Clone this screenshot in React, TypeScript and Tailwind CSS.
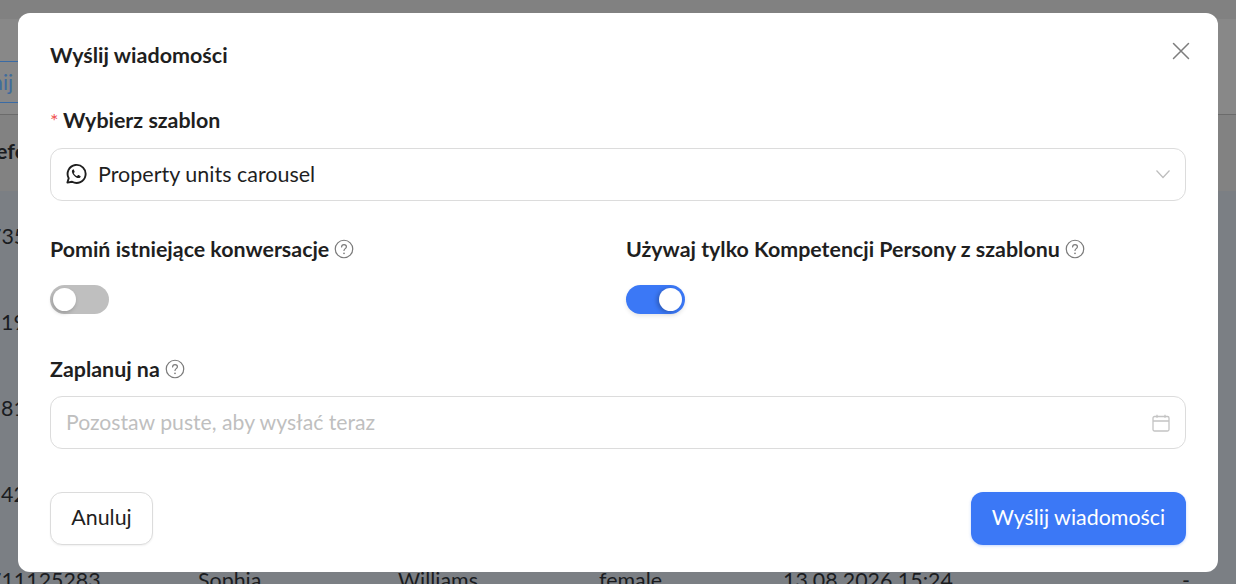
import React from "react";

const Help = () => (
  <svg width="20" height="20" viewBox="0 0 20 20" fill="none" className="shrink-0 text-[#7a7a7a]">
    <circle cx="10" cy="10" r="8.75" stroke="currentColor" strokeWidth="1.2" />
    <path d="M7.600 8c0-1.300 1-2.300 2.400-2.300s2.400.9 2.400 2.100c0 1.800-2.400 1.900-2.400 3.700" stroke="currentColor" strokeWidth="1.200" strokeLinecap="round" />
    <circle cx="10" cy="14.300" r=".85" fill="currentColor" />
  </svg>
);

const WhatsApp = () => (
  <svg width="22" height="22" viewBox="0 0 22 22" fill="none" className="shrink-0">
    <path d="M2.400 19.600l1.300-4.400A9 9 0 1 1 7.100 18.700L2.400 19.600z" stroke="#1f1f1f" strokeWidth="1.900" strokeLinejoin="round" />
    <path d="M8.100 6.400c-.6.2-1.300 1-1.200 2 .2 2.900 3.700 6.300 6.600 6.700 1 .1 1.900-.6 2.100-1.300.1-.4 0-.7-.3-.9l-1.700-.9c-.3-.1-.6-.1-.8.200l-.6.700c-.2.200-.4.200-.7.100-1.100-.5-2-1.400-2.600-2.500-.1-.3-.1-.5.100-.7l.5-.6c.2-.2.2-.5.100-.8l-.8-1.700c-.1-.3-.3-.4-.7-.3z" fill="#1f1f1f" />
  </svg>
);

const Row = ({ id, left, a, b, c, top }: { id: string; left: number; a?: string; b?: string; c?: string; top: number }) => (
  <div className="absolute left-0 right-0 h-6 text-[21.4px] leading-6 text-[#1a1c1f]" style={{ top }}>
    <span className="absolute" style={{ left }}>{id}</span>
    {a && <span className="absolute left-[198px]">{a}</span>}
    {b && <span className="absolute left-[398px]">{b}</span>}
    {c && <span className="absolute left-[599px]">{c}</span>}
  </div>
);

export default function App() {
  return (
    <div className="relative h-[584px] w-[1236px] overflow-hidden bg-[#818181] font-['Lato','Liberation_Sans',sans-serif]">
      <div className="absolute inset-x-0 top-[19px] h-[96px] border-b border-[#6b6b6b] bg-[#888888]" />
      <div className="absolute inset-x-0 top-[115px] h-[76px] bg-[#828282]" />
      <div className="absolute left-0 top-[61px] flex h-[42px] w-[18px] items-center overflow-hidden border-y border-[#3a6ba5] text-[21.4px] text-[#406c9c]">
        <span className="ml-[-9px] whitespace-nowrap">nij</span>
      </div>
      <div className="absolute left-[-31px] top-[139px] text-[21.4px] font-bold leading-6 text-[#1a1c1f]">
        Telefon
      </div>
      <div className="absolute inset-x-0 bottom-0 top-[191px] bg-[#7b7f84]" />
      <Row id="735" left={-11} top={224} />
      <Row id="19" left={1} top={310} />
      <Row id="81" left={1} top={396} />
      <Row id="42" left={1} top={482} />
      <Row id="711125283" left={-11} a="Sophia" b="Williams" c="female" top={568} />
      <span className="absolute left-[783px] top-[568px] text-[21.4px] leading-6 text-[#1a1c1f]">13.08.2026 15:24</span>
      <span className="absolute left-[1182px] top-[568px] text-[21.4px] leading-6 text-[#1a1c1f]">-</span>

      <div className="absolute left-[18px] top-[13px] flex h-[559px] w-[1200px] flex-col rounded-[12px] bg-white px-[32px] text-[#1f1f1f]">
        <div className="flex h-[95px] items-start justify-between pt-[26px]">
          <h2 className="text-[21.5px] font-bold leading-[32px]">Wyślij wiadomości</h2>
          <svg width="18" height="18" viewBox="0 0 18 18" className="mr-[-4px] mt-[3px] text-[#7d7d7d]" fill="none">
            <path d="M1.500 1.500l15 15M16.500 1.500l-15 15" stroke="currentColor" strokeWidth="1.500" strokeLinecap="round" />
          </svg>
        </div>

        <label className="flex h-[24px] items-center text-[21.4px] font-bold leading-6">
          <span className="mr-[4px] w-[9px] text-[20px] font-normal text-[#f05252]">*</span>
          Wybierz szablon
        </label>
        <div className="mt-[16px] flex h-[53px] items-center rounded-[12px] border border-[#dcdcdc] pb-[2px] pl-[14px] pr-[14px]">
          <WhatsApp />
          <span className="ml-[11px] flex-1 text-[21.5px] leading-6">Property units carousel</span>
          <svg width="16" height="16" viewBox="0 0 16 16" fill="none" className="text-[#bdbdbd]">
            <path d="M1.500 4.500L8 11.500l6.500-7" stroke="currentColor" strokeWidth="1.200" />
          </svg>
        </div>

        <div className="mt-[36px] grid grid-cols-[576px_1fr]">
          <div>
            <div className="flex h-[24px] items-center gap-[5px] text-[21.4px] font-bold leading-6">
              Pomiń istniejące konwersacje <Help />
            </div>
            <div className="mt-[24px] flex h-[29px] w-[59px] items-center rounded-full bg-[#bfbfbf] pl-[3px]">
              <div className="h-[23px] w-[23px] rounded-full bg-white shadow-[-1px_2px_4px_rgba(0,0,0,0.2)]" />
            </div>
          </div>
          <div>
            <div className="flex h-[24px] items-center gap-[5px] text-[21.4px] font-bold leading-6">
              Używaj tylko Kompetencji Persony z szablonu <Help />
            </div>
            <div className="mt-[24px] flex h-[29px] w-[59px] items-center justify-end rounded-full bg-[#3b78f6] pr-[3px] shadow-[0_2px_4px_rgba(0,0,0,0.1)]">
              <div className="h-[23px] w-[23px] rounded-full bg-white shadow-[-2px_1px_4px_rgba(0,0,0,0.25)]" />
            </div>
          </div>
        </div>

        <div className="mt-[43px] flex h-[24px] items-center gap-[5px] text-[21.4px] font-bold leading-6">
          Zaplanuj na <Help />
        </div>
        <div className="mt-[15px] flex h-[53px] items-center justify-between rounded-[12px] border border-[#dcdcdc] pl-[15px] pr-[15px]">
          <span className="pb-[2px] text-[21.2px] leading-6 text-[#bfbfbf]">Pozostaw puste, aby wysłać teraz</span>
          <svg width="18" height="18" viewBox="0 0 18 18" fill="none" className="text-[#c4c4c4]">
            <rect x="1" y="2.500" width="16" height="14.500" rx="1.500" stroke="currentColor" strokeWidth="1.300" />
            <path d="M1 7h16M5 .8v3M13 .8v3" stroke="currentColor" strokeWidth="1.300" />
          </svg>
        </div>

        <div className="mt-[43px] flex items-center justify-between">
          <button className="h-[53px] w-[103px] rounded-[12px] border border-[#dcdcdc] bg-white pb-[2px] text-[21.4px] shadow-[0_1px_2px_rgba(0,0,0,0.06)]">
            Anuluj
          </button>
          <button className="h-[53px] w-[215px] rounded-[12px] bg-[#3b78f6] pb-[2px] text-[21.4px] text-white shadow-[0_1px_3px_rgba(59,120,246,0.3)]">
            Wyślij wiadomości
          </button>
        </div>
      </div>
    </div>
  );
}
